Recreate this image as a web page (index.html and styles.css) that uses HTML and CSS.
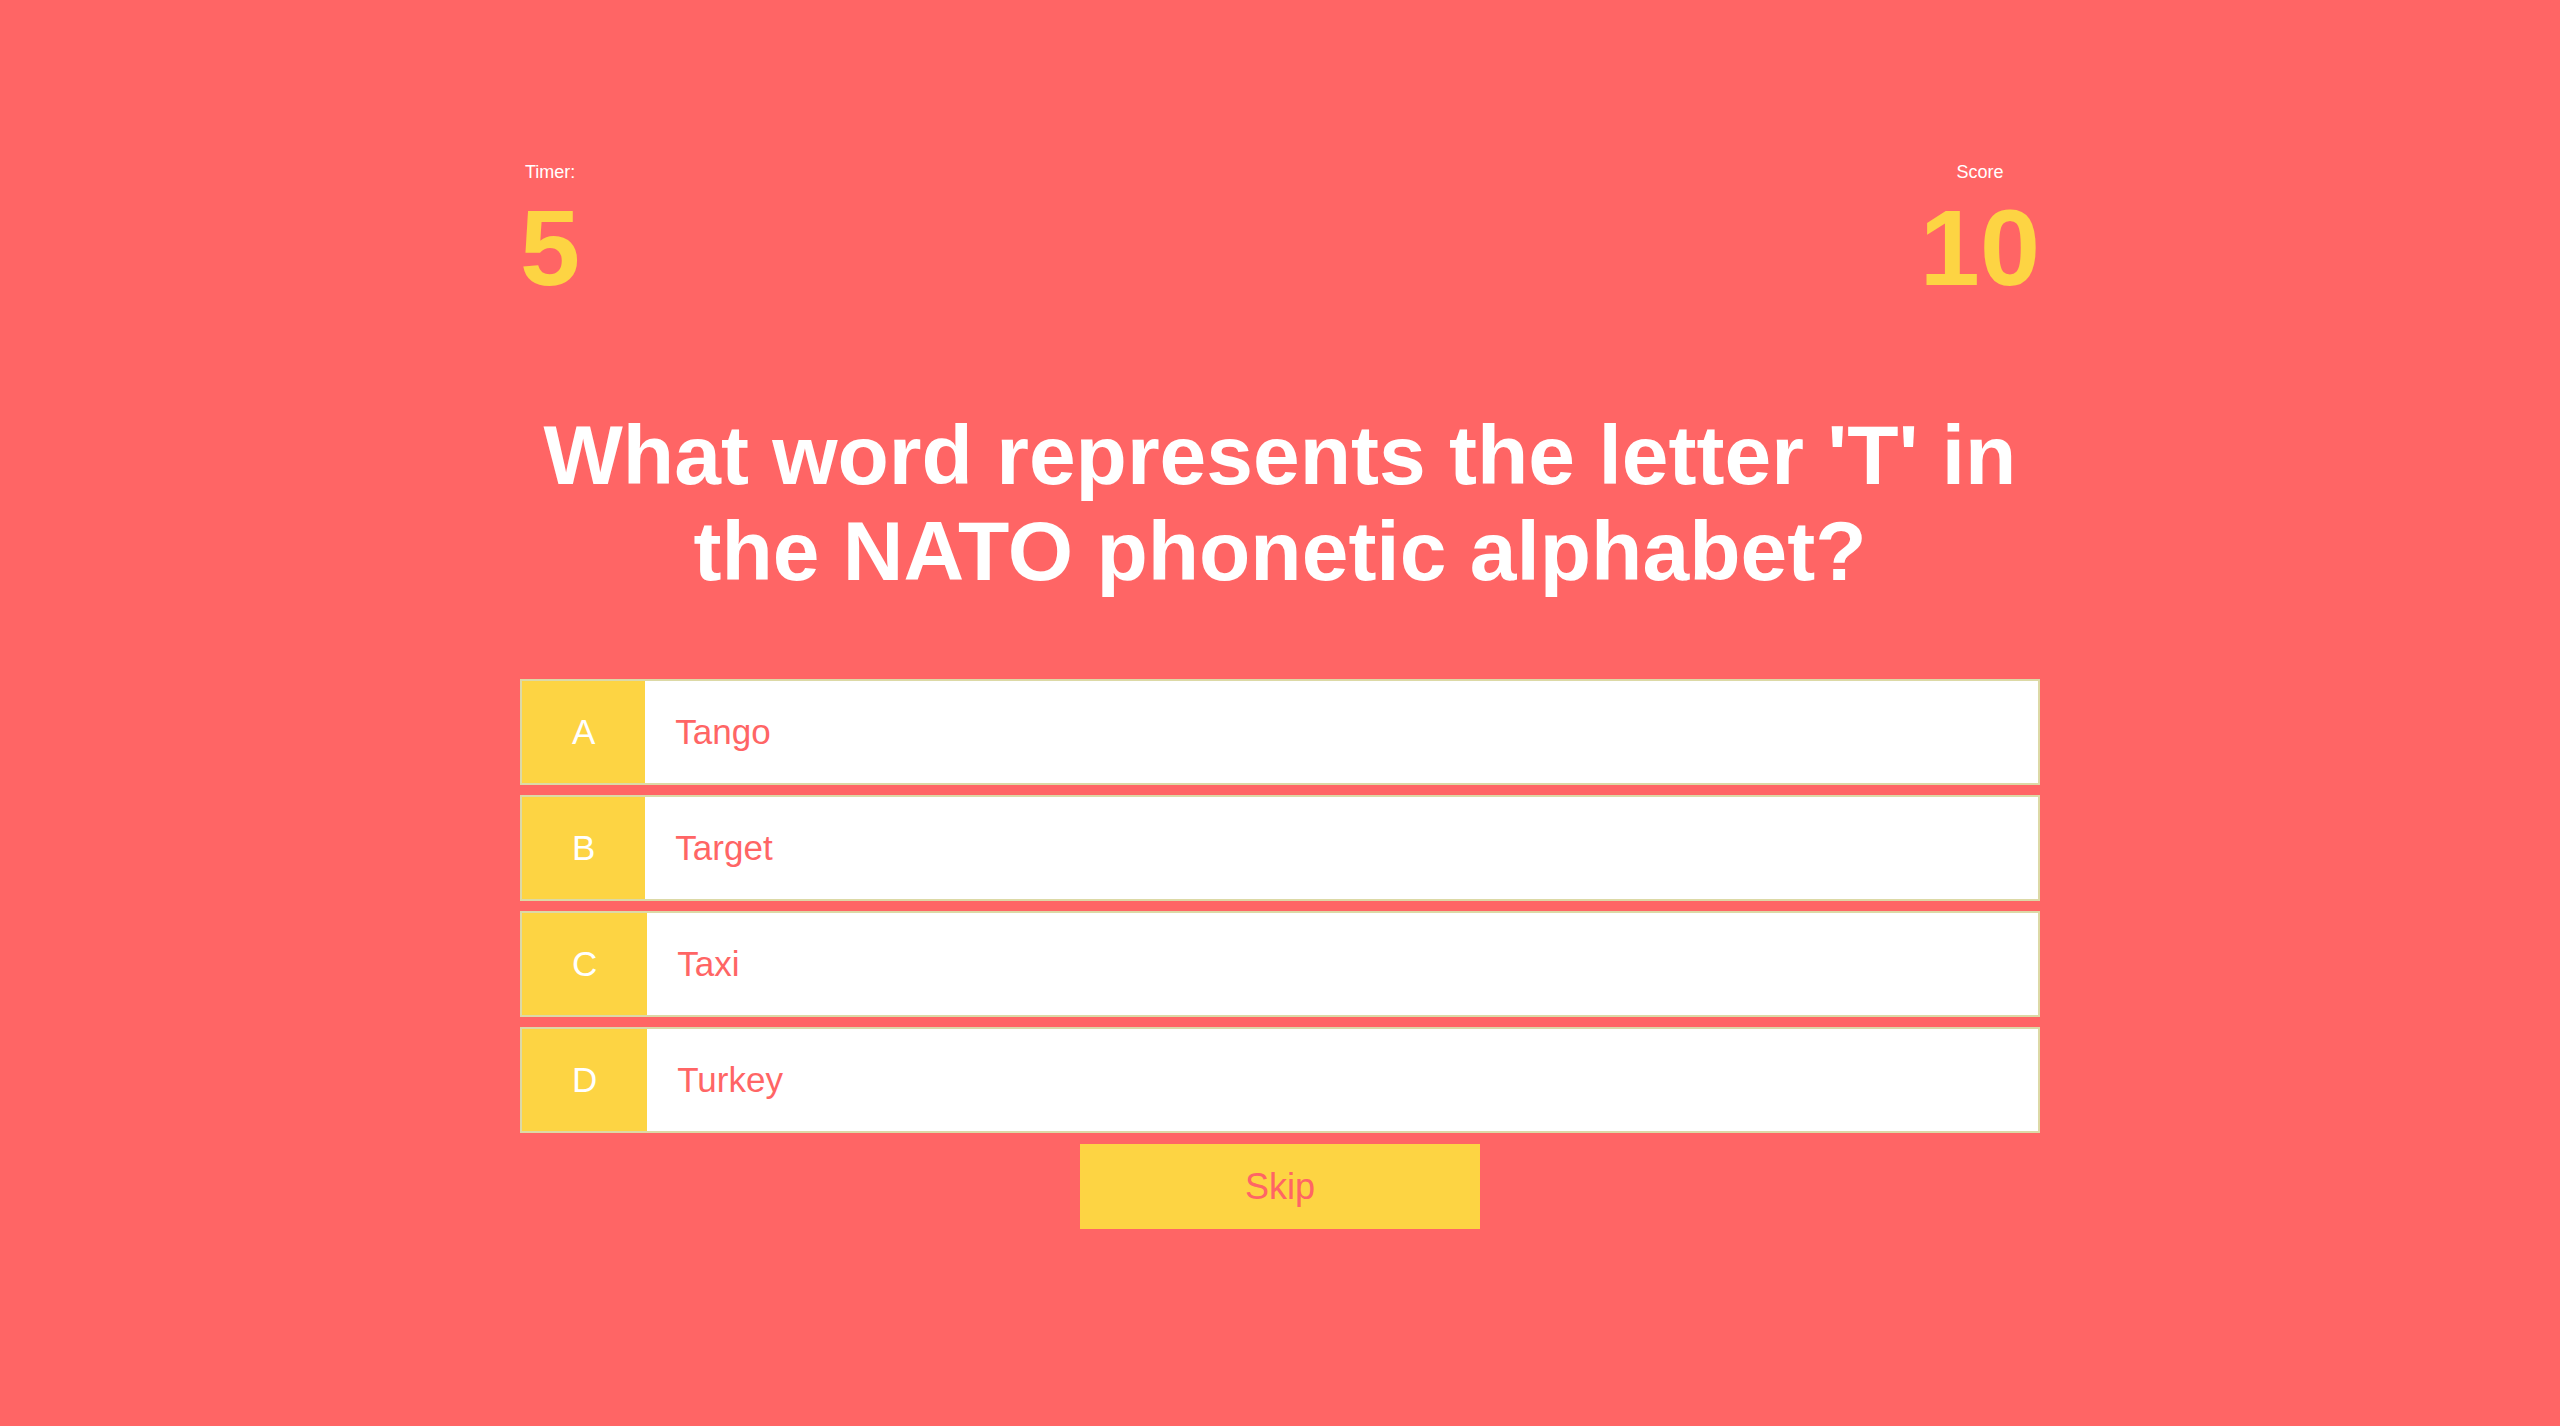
FILE: index.html
```html
<!DOCTYPE html>
<html lang="en">
<head>
<meta charset="utf-8">
<title>Quiz</title>
<link rel="stylesheet" href="styles.css">
</head>
<body>
<main class="quiz">
  <header class="hud">
    <div class="stat">
      <div class="stat-label">Timer:</div>
      <div class="stat-value">5</div>
    </div>
    <div class="stat">
      <div class="stat-label">Score</div>
      <div class="stat-value">10</div>
    </div>
  </header>
  <h1 class="question">What word represents the letter 'T' in the NATO phonetic alphabet?</h1>
  <ul class="answers">
    <li class="answer"><span class="answer-key">A</span><span class="answer-text">Tango</span></li>
    <li class="answer"><span class="answer-key">B</span><span class="answer-text">Target</span></li>
    <li class="answer"><span class="answer-key">C</span><span class="answer-text">Taxi</span></li>
    <li class="answer"><span class="answer-key">D</span><span class="answer-text">Turkey</span></li>
  </ul>
  <button class="skip" type="button">Skip</button>
</main>
</body>
</html>
```

FILE: styles.css
```css
html, body {
  margin: 0;
  padding: 0;
}
body {
  background: #ff6565;
  font-family: "Liberation Sans", Arial, sans-serif;
  min-height: 1426px;
}
.quiz {
  width: 1520px;
  margin: 0 auto;
  padding-top: 162px;
  display: flex;
  flex-direction: column;
}
.hud {
  display: flex;
  justify-content: space-between;
  align-items: flex-start;
}
.stat {
  display: flex;
  flex-direction: column;
  align-items: center;
}
.stat-label {
  color: #ffffff;
  font-size: 18px;
  line-height: 21px;
}
.stat-value {
  color: #fdd443;
  font-size: 108px;
  font-weight: bold;
  line-height: 124px;
  margin-top: 3px;
}
.question {
  margin: 97px 0 80px;
  color: #ffffff;
  font-size: 84px;
  font-weight: bold;
  line-height: 96px;
  text-align: center;
}
.answers {
  list-style: none;
  margin: 0;
  padding: 0;
  display: flex;
  flex-direction: column;
  gap: 10px;
}
.answer {
  box-sizing: border-box;
  height: 106px;
  display: flex;
  align-items: stretch;
  background: #ffffff;
  border: 2px solid #dcd9a6;
  font-size: 35px;
}
.answer-key {
  display: flex;
  align-items: center;
  padding: 0 50px;
  background: #fdd443;
  color: #ffffff;
}
.answer-text {
  display: flex;
  align-items: center;
  padding-left: 30px;
  color: #ff6565;
}
.skip {
  align-self: center;
  margin-top: 11px;
  width: 400px;
  height: 85px;
  border: none;
  background: #fdd443;
  color: #ff6565;
  font-family: "Liberation Sans", Arial, sans-serif;
  font-size: 36px;
  padding: 0;
}
```
